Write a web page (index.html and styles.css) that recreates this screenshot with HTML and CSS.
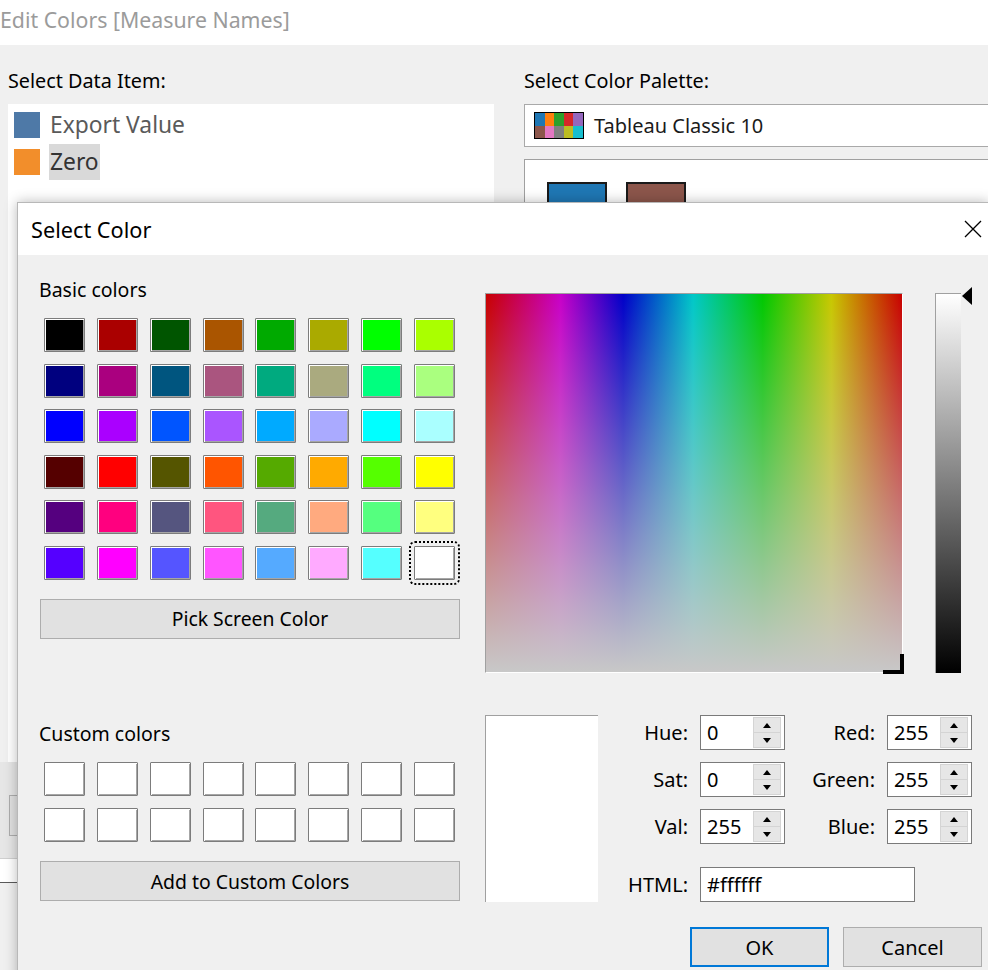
FILE: index.html
```html
<!DOCTYPE html>
<html lang="en">
<head>
<meta charset="utf-8">
<title>Edit Colors</title>
<link rel="stylesheet" href="styles.css">
</head>
<body>
<div class="screen">
  <header class="app-title">Edit Colors [Measure Names]</header>
  <main class="editor">
    <section class="pane pane-items">
      <h2 class="pane-label">Select Data Item:</h2>
      <ul class="item-list">
        <li class="item"><span class="item-swatch" style="background:#4e79a7"></span><span class="item-name">Export Value</span></li>
        <li class="item item-selected"><span class="item-swatch" style="background:#f28e2b"></span><span class="item-name">Zero</span></li>
      </ul>
      <div class="items-footer"><span class="bg-button"></span></div>
      <div class="items-strip"></div>
    </section>
    <section class="pane pane-palette">
      <h2 class="pane-label">Select Color Palette:</h2>
      <div class="palette-select">
        <span class="palette-icon">
          <i style="background:#1f77b4"></i><i style="background:#ff7f0e"></i><i style="background:#2ca02c"></i><i style="background:#d62728"></i><i style="background:#9467bd"></i>
          <i style="background:#8c564b"></i><i style="background:#e377c2"></i><i style="background:#7f7f7f"></i><i style="background:#bcbd22"></i><i style="background:#17becf"></i>
        </span>
        <span class="palette-name">Tableau Classic 10</span>
      </div>
      <div class="palette-box">
        <span class="pal-swatch" style="background:#1f77b4"></span>
        <span class="pal-swatch" style="background:#8c564b"></span>
      </div>
    </section>
  </main>

  <div class="dialog">
    <div class="dlg-titlebar">
      <span class="dlg-title">Select Color</span>
      <svg class="dlg-close" viewBox="0 0 18 18" width="18" height="18"><path d="M1 1L17 17M17 1L1 17" stroke="#000" stroke-width="1.3" fill="none"/></svg>
    </div>
    <div class="dlg-body">
      <div class="dlg-row">
        <div class="dlg-left">
          <div class="dlg-label">Basic colors</div>
          <div class="swatch-grid basic">
            <span class="swatch" style="background:#000000"></span><span class="swatch" style="background:#aa0000"></span><span class="swatch" style="background:#005500"></span><span class="swatch" style="background:#aa5500"></span><span class="swatch" style="background:#00aa00"></span><span class="swatch" style="background:#aaaa00"></span><span class="swatch" style="background:#00ff00"></span><span class="swatch" style="background:#aaff00"></span>
            <span class="swatch" style="background:#00007f"></span><span class="swatch" style="background:#aa007f"></span><span class="swatch" style="background:#00557f"></span><span class="swatch" style="background:#aa557f"></span><span class="swatch" style="background:#00aa7f"></span><span class="swatch" style="background:#aaaa7f"></span><span class="swatch" style="background:#00ff7f"></span><span class="swatch" style="background:#aaff7f"></span>
            <span class="swatch" style="background:#0000ff"></span><span class="swatch" style="background:#aa00ff"></span><span class="swatch" style="background:#0055ff"></span><span class="swatch" style="background:#aa55ff"></span><span class="swatch" style="background:#00aaff"></span><span class="swatch" style="background:#aaaaff"></span><span class="swatch" style="background:#00ffff"></span><span class="swatch" style="background:#aaffff"></span>
            <span class="swatch" style="background:#550000"></span><span class="swatch" style="background:#ff0000"></span><span class="swatch" style="background:#555500"></span><span class="swatch" style="background:#ff5500"></span><span class="swatch" style="background:#55aa00"></span><span class="swatch" style="background:#ffaa00"></span><span class="swatch" style="background:#55ff00"></span><span class="swatch" style="background:#ffff00"></span>
            <span class="swatch" style="background:#55007f"></span><span class="swatch" style="background:#ff007f"></span><span class="swatch" style="background:#55557f"></span><span class="swatch" style="background:#ff557f"></span><span class="swatch" style="background:#55aa7f"></span><span class="swatch" style="background:#ffaa7f"></span><span class="swatch" style="background:#55ff7f"></span><span class="swatch" style="background:#ffff7f"></span>
            <span class="swatch" style="background:#5500ff"></span><span class="swatch" style="background:#ff00ff"></span><span class="swatch" style="background:#5555ff"></span><span class="swatch" style="background:#ff55ff"></span><span class="swatch" style="background:#55aaff"></span><span class="swatch" style="background:#ffaaff"></span><span class="swatch" style="background:#55ffff"></span><span class="swatch swatch-current" style="background:#ffffff"></span>
          </div>
          <button class="dlg-btn wide">Pick Screen Color</button>
        </div>
        <div class="picker">
          <div class="spectrum"><span class="spectrum-cursor"></span></div>
          <div class="value-bar">
            <svg class="value-arrow" viewBox="0 0 10 18" width="10" height="18"><path d="M0 9L10 0L10 18Z" fill="#000"/></svg>
          </div>
        </div>
      </div>

      <div class="dlg-row dlg-row-bottom">
        <div class="dlg-left">
          <div class="dlg-label">Custom colors</div>
          <div class="swatch-grid custom">
            <span class="swatch"></span><span class="swatch"></span><span class="swatch"></span><span class="swatch"></span><span class="swatch"></span><span class="swatch"></span><span class="swatch"></span><span class="swatch"></span>
            <span class="swatch"></span><span class="swatch"></span><span class="swatch"></span><span class="swatch"></span><span class="swatch"></span><span class="swatch"></span><span class="swatch"></span><span class="swatch"></span>
          </div>
          <button class="dlg-btn wide">Add to Custom Colors</button>
        </div>
        <div class="color-edit">
          <div class="preview"></div>
          <div class="fields">
            <label class="field-label">Hue:</label>
            <div class="spin"><span class="spin-value">0</span><span class="spin-btns"><span class="spin-btn"><i class="arr-up"></i></span><span class="spin-btn"><i class="arr-down"></i></span></span></div>
            <label class="field-label">Red:</label>
            <div class="spin"><span class="spin-value">255</span><span class="spin-btns"><span class="spin-btn"><i class="arr-up"></i></span><span class="spin-btn"><i class="arr-down"></i></span></span></div>

            <label class="field-label">Sat:</label>
            <div class="spin"><span class="spin-value">0</span><span class="spin-btns"><span class="spin-btn"><i class="arr-up"></i></span><span class="spin-btn"><i class="arr-down"></i></span></span></div>
            <label class="field-label">Green:</label>
            <div class="spin"><span class="spin-value">255</span><span class="spin-btns"><span class="spin-btn"><i class="arr-up"></i></span><span class="spin-btn"><i class="arr-down"></i></span></span></div>

            <label class="field-label">Val:</label>
            <div class="spin"><span class="spin-value">255</span><span class="spin-btns"><span class="spin-btn"><i class="arr-up"></i></span><span class="spin-btn"><i class="arr-down"></i></span></span></div>
            <label class="field-label">Blue:</label>
            <div class="spin"><span class="spin-value">255</span><span class="spin-btns"><span class="spin-btn"><i class="arr-up"></i></span><span class="spin-btn"><i class="arr-down"></i></span></span></div>

            <label class="field-label html-label">HTML:</label>
            <div class="html-input">#ffffff</div>
          </div>
        </div>
      </div>

      <div class="dlg-actions">
        <button class="dlg-btn action default">OK</button>
        <button class="dlg-btn action">Cancel</button>
      </div>
    </div>
  </div>
</div>
</body>
</html>
```

FILE: styles.css
```css
* { box-sizing: border-box; }
html, body { margin: 0; padding: 0; }
body {
  width: 988px;
  height: 970px;
  overflow: hidden;
  background: #f0f0f0;
  font-family: "Noto Sans", "DejaVu Sans", sans-serif;
  color: #000;
}
.screen { position: relative; width: 988px; height: 970px; overflow: hidden; }

/* background app */
.app-title {
  height: 45px;
  background: #fff;
  color: #9b9b9b;
  font-size: 21.3px;
  line-height: 40px;
  white-space: nowrap;
}
.editor { display: flex; gap: 30px; padding: 25px 0 0 8px; }
.pane { flex: none; }
.pane-items { width: 486px; }
.pane-palette { width: 480px; }
.pane-label {
  margin: 0;
  font-size: 19.8px;
  font-weight: normal;
  line-height: 22px;
  height: 22px;
  white-space: nowrap;
}
.item-list {
  list-style: none;
  margin: 12px 0 0;
  padding: 3px 6px 0;
  background: #fff;
  height: 658px;
}
.item { display: flex; align-items: center; gap: 9px; height: 36px; margin-bottom: 1px; }
.item-swatch { width: 26px; height: 26px; flex: none; }
.item-name { font-size: 22.8px; color: #5a5a5a; line-height: 36px; padding: 0 1px; }
.item-selected .item-name { background: #d9d9d9; color: #333; }
.items-footer {
  height: 96px;
  margin-left: -8px;
  background: #e6e6e6;
  padding: 33px 0 0 9px;
}
.bg-button { display: block; width: 120px; height: 41px; background: #e1e1e1; border: 1px solid #adadad; }
.items-strip {
  margin-left: -8px;
  height: 25px;
  background: #fff;
  border-top: 1px solid #cfcfcf;
  border-bottom: 1px solid #5a5a5a;
}

.palette-select {
  margin-top: 12px;
  height: 43px;
  background: #fff;
  border: 1px solid #a9a9a9;
  display: flex;
  align-items: center;
  gap: 10px;
  padding-left: 9px;
}
.palette-icon {
  width: 50px;
  height: 27px;
  border: 1px solid #000;
  display: grid;
  grid-template-columns: repeat(5, 1fr);
  grid-template-rows: repeat(2, 1fr);
  flex: none;
}
.palette-icon i { display: block; }
.palette-name { font-size: 20px; color: #1a1a1a; white-space: nowrap; }
.palette-box {
  margin-top: 12px;
  height: 200px;
  background: #fff;
  border: 1px solid #a0a0a0;
  padding: 22px 0 0 22px;
  display: flex;
  gap: 19px;
  align-items: flex-start;
}
.pal-swatch { width: 60px; height: 40px; border: 2px solid #1a1a1a; flex: none; }

/* dialog */
.dialog {
  position: absolute;
  left: 17px;
  top: 202px;
  width: 972px;
  height: 790px;
  background: #f0f0f0;
  border: 1px solid #b8b8b8;
  box-shadow: 0 0 12px rgba(0, 0, 0, 0.28);
}
.dlg-titlebar {
  height: 52px;
  background: #fff;
  display: flex;
  align-items: center;
  padding: 0 6px 0 13px;
}
.dlg-title { font-size: 21.7px; }
.dlg-close { margin-left: auto; display: block; }
.dlg-body { padding: 24px 6px 0 22px; }
.dlg-row { display: flex; gap: 25px; align-items: flex-start; }
.dlg-row-bottom { margin-top: 42px; }
.dlg-row-bottom .dlg-left { padding-top: 8px; }
.dlg-left { width: 420px; flex: none; }
.dlg-label { font-size: 19.5px; line-height: 22px; height: 22px; margin-left: -1px; white-space: nowrap; }
.swatch-grid {
  margin: 17px 0 0 4px;
  display: grid;
  grid-template-columns: repeat(8, 41px);
  grid-auto-rows: 34px;
  column-gap: 11.86px;
  row-gap: 11.6px;
}
.swatch-grid.custom { row-gap: 12px; }
.swatch {
  display: block;
  background: #fff;
  border: 1px solid #7c7c7c;
  border-radius: 1px;
  box-shadow: inset 1px 1px 0 #fff, inset -1px -1px 0 #a6a6a6;
}
.swatch-current { outline: 2px dotted #000; outline-offset: 3px; }
.dlg-btn {
  font-family: inherit;
  font-size: 20px;
  color: #000;
  background: #e1e1e1;
  border: 1px solid #adadad;
  padding: 0;
  margin: 0;
}
.dlg-btn.wide { display: block; margin-top: 19px; width: 420px; height: 40px; font-size: 19.4px; }

.picker { display: flex; gap: 32px; margin-top: 14px; align-items: flex-start; }
.spectrum {
  position: relative;
  width: 418px;
  height: 380px;
  border-top: 1px solid #a0a0a0;
  border-left: 1px solid #a0a0a0;
  border-right: 1px solid #fff;
  border-bottom: 1px solid #fff;
  background:
    linear-gradient(to bottom, rgba(200, 200, 200, 0), #c8c8c8),
    linear-gradient(to right, #c80000 0%, #c800c8 17.9%, #0000c8 33%, #00c8c8 49.8%, #00c800 66.5%, #c8c800 83%, #c80000 100%);
}
.spectrum-cursor {
  position: absolute;
  right: -2px;
  bottom: -2px;
  width: 21px;
  height: 20px;
  border-right: 4px solid #000;
  border-bottom: 4px solid #000;
}
.value-bar {
  position: relative;
  width: 26px;
  height: 380px;
  border-top: 1px solid #a0a0a0;
  border-left: 1px solid #a0a0a0;
  background: linear-gradient(to bottom, #fff, #000);
}
.value-arrow { position: absolute; left: 26px; top: -7px; display: block; }

.color-edit { display: flex; align-items: flex-start; }
.preview {
  width: 113px;
  height: 187px;
  background: #fff;
  border-top: 1px solid #a0a0a0;
  border-left: 1px solid #a0a0a0;
  flex: none;
}
.fields {
  display: grid;
  grid-template-columns: 90px 85px 78px 85px;
  grid-template-rows: 35px 35px 35px 46px;
  column-gap: 12px;
  row-gap: 12px;
}
.field-label { font-size: 20px; text-align: right; align-self: center; white-space: nowrap; }
.spin {
  display: flex;
  align-items: center;
  background: #fff;
  border: 1px solid #7a7a7a;
  padding: 0 3px 0 6px;
}
.spin-value { font-size: 20px; }
.spin-btns { margin-left: auto; display: flex; flex-direction: column; width: 28px; height: 31px; }
.spin-btn {
  flex: 1;
  display: flex;
  align-items: center;
  justify-content: center;
  background: #e6e6e6;
  border: 1px solid #d4d4d4;
}
.spin-btn + .spin-btn { border-top: none; }
.arr-up, .arr-down { display: block; width: 0; height: 0; border-left: 4px solid transparent; border-right: 4px solid transparent; }
.arr-up { border-bottom: 5px solid #000; }
.arr-down { border-top: 5px solid #000; }
.html-label { grid-column: 1; align-self: end; height: 35px; line-height: 35px; }
.html-input {
  align-self: end;
  grid-column: 2 / span 3;
  width: 215px;
  height: 35px;
  background: #fff;
  border: 1px solid #7a7a7a;
  font-size: 20px;
  line-height: 33px;
  padding-left: 6px;
}

.dlg-actions { display: flex; justify-content: flex-end; gap: 14px; margin-top: 25px; }
.dlg-btn.action { width: 139px; height: 40px; }
.dlg-btn.default { border: 2px solid #0078d7; }
```
